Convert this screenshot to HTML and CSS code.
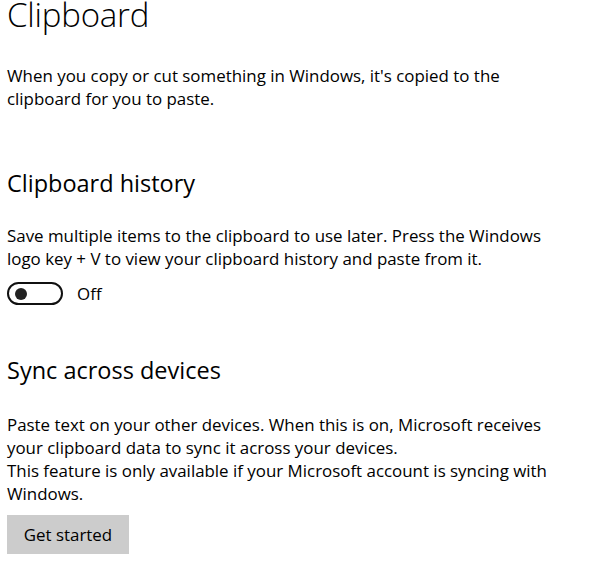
FILE: index.html
```html
<!DOCTYPE html>
<html>
<head>
<meta charset="utf-8">
<link rel="stylesheet" href="styles.css">
</head>
<body>
<main class="page">
  <h1 class="title">Clipboard</h1>
  <p class="text intro">When you copy or cut something in Windows, it's copied to the clipboard for you to paste.</p>

  <section class="section history">
    <h2 class="heading">Clipboard history</h2>
    <p class="text">Save multiple items to the clipboard to use later. Press the Windows logo key + V to view your clipboard history and paste from it.</p>
    <div class="toggle-row">
      <span class="toggle"><span class="knob"></span></span>
      <span class="toggle-label">Off</span>
    </div>
  </section>

  <section class="section sync">
    <h2 class="heading">Sync across devices</h2>
    <p class="text">Paste text on your other devices. When this is on, Microsoft receives your clipboard data to sync it across your devices.<br>This feature is only available if your Microsoft account is syncing with Windows.</p>
    <button class="btn">Get started</button>
  </section>
</main>
</body>
</html>
```

FILE: styles.css
```css
html, body {
  margin: 0;
  padding: 0;
  background: #ffffff;
}
.page {
  padding: 0 0 0 7px;
  width: 550px;
  color: #000;
  font-family: "Open Sans", "Noto Sans", sans-serif;
}
.title {
  margin: 0;
  font-size: 33px;
  font-weight: 300;
  line-height: 30px;
  letter-spacing: -0.2px;
}
.text {
  margin: 0;
  font-size: 16.9px;
  line-height: 23px;
  color: #000;
}
.intro {
  margin-top: 34px;
}
.section {
  display: flex;
  flex-direction: column;
  align-items: flex-start;
}
.heading {
  margin: 0;
  font-size: 23.5px;
  font-weight: 400;
  line-height: 30px;
}
.history {
  margin-top: 58px;
}
.history .heading {
  margin-bottom: 26px;
}
.toggle-row {
  display: flex;
  align-items: center;
  gap: 14px;
  margin-top: 12px;
}
.toggle {
  box-sizing: border-box;
  width: 56px;
  height: 23px;
  border: 2.6px solid #111;
  border-radius: 12px;
  display: flex;
  align-items: center;
  padding-left: 6px;
}
.knob {
  width: 12px;
  height: 12px;
  border-radius: 50%;
  background: #222;
}
.toggle-label {
  font-size: 16.9px;
}
.sync {
  margin-top: 50px;
}
.sync .heading {
  margin-bottom: 28px;
}
.btn {
  margin-top: 10px;
  width: 122px;
  height: 39px;
  background: #cccccc;
  border: none;
  font-family: inherit;
  font-size: 16.9px;
  color: #000;
  padding: 0;
}
```
